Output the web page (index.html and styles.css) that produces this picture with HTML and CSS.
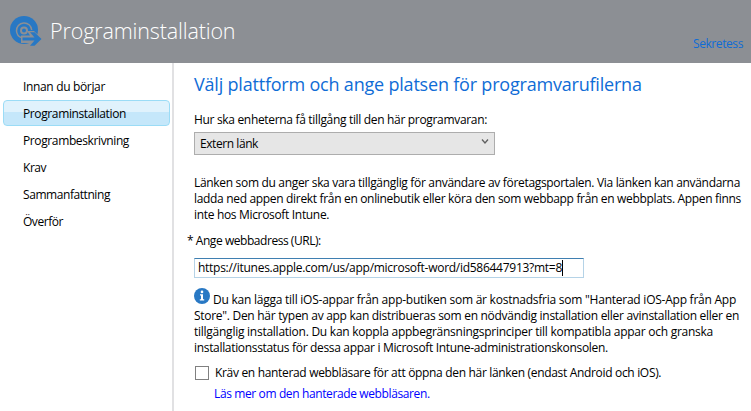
FILE: index.html
```html
<!DOCTYPE html>
<html lang="sv">
<head>
<meta charset="utf-8">
<title>Programinstallation</title>
<link rel="stylesheet" href="styles.css">
</head>
<body>
<header class="banner">
  <svg class="logo" viewBox="0 0 32 32" width="32" height="32" aria-hidden="true">
    <circle cx="14" cy="14" r="14" fill="#2878c4"/>
    <path d="M6.500 15a7.600 7.600 0 0 1 15.200-1M6.500 15q.5 5 4.500 6.500" fill="none" stroke="#8c8f94" stroke-width="1.500"/>
    <circle cx="14" cy="14.500" r="3" fill="none" stroke="#8c8f94" stroke-width="2"/>
    <path d="M11 19.500h9l-3-4.500h7l8 8-8 8h-7l3-4H11z" fill="#8c8f94"/>
    <path d="M12.500 21.500h12l-4.500-5.300h4.500l7 6.800-7 6.800h-4.500l4.500-5.300h-12z" fill="#2878c4"/>
  </svg>
  <h1 class="title">Programinstallation</h1>
  <a class="privacy">Sekretess</a>
</header>
<main class="layout">
  <nav class="steps">
    <a class="step step-start">Innan du börjar</a>
    <a class="step step-active">Programinstallation</a>
    <a class="step">Programbeskrivning</a>
    <a class="step step-short">Krav</a>
    <a class="step step-summary">Sammanfattning</a>
    <a class="step step-short">Överför</a>
  </nav>
  <section class="content">
    <h2 class="heading">Välj plattform och ange platsen för programvarufilerna</h2>
    <p class="label">Hur ska enheterna få tillgång till den här programvaran:</p>
    <div class="select">
      <span>Extern länk</span>
      <svg viewBox="0 0 8 8" width="8" height="8" aria-hidden="true"><path d="M1 1.500l3 3.500 3-3.500" fill="none" stroke="#606060" stroke-width="1.300"/></svg>
    </div>
    <p class="intro">
      <span class="line t318">Länken som du anger ska vara tillgänglig för användare av företagsportalen. Via länken kan användarna</span>
      <span class="line t325">ladda ned appen direkt från en onlinebutik eller köra den som webbapp från en webbplats. Appen finns</span>
      <span class="line t325">inte hos Microsoft Intune.</span>
    </p>
    <p class="url-label">* Ange webbadress (URL):</p>
    <div class="url"><span class="url-text">https://itunes.apple.com/us/app/microsoft-word/id586447913?mt=8</span><i class="caret"></i></div>
    <p class="info">
      <span class="line line-icon t241"><svg class="info-icon" viewBox="0 0 16 16" width="16" height="16" aria-hidden="true"><circle cx="8" cy="8" r="8" fill="#2878c4"/><circle cx="8" cy="3.900" r="1.300" fill="#fff"/><path d="M6 6.200h3v5h1.200v1.300H5.800v-1.300H7V7.400H6z" fill="#fff"/></svg>Du kan lägga till iOS-appar från app-butiken som är kostnadsfria som "Hanterad iOS-App från App</span>
      <span class="line t288">Store". Den här typen av app kan distribueras som en nödvändig installation eller avinstallation eller en</span>
      <span class="line t255">tillgänglig installation. Du kan koppla appbegränsningsprinciper till kompatibla appar och granska</span>
      <span class="line t325">installationsstatus för dessa appar i Microsoft Intune-administrationskonsolen.</span>
    </p>
    <label class="check"><span class="box"></span><span class="t325">Kräv en hanterad webbläsare för att öppna den här länken (endast Android och iOS).</span></label>
    <a class="more">Läs mer om den hanterade webbläsaren.</a>
  </section>
</main>
</body>
</html>
```
FILE: styles.css
```css
* { box-sizing: border-box; }

body {
  margin: 0;
  height: 411px;
  overflow: hidden;
  display: flex;
  flex-direction: column;
  background: #fff;
  color: #000;
  font: 12px/16px "Open Sans", "Noto Sans", sans-serif;
  white-space: nowrap;
}

h1, h2, p { margin: 0; }

.banner {
  height: 63px;
  flex: none;
  display: flex;
  align-items: flex-start;
  padding: 16px 8px 0 10px;
  background: #8c8f94;
}

.title {
  margin-left: 8px;
  font-size: 21.5px;
  line-height: 30px;
  font-weight: 300;
  letter-spacing: -.14px;
  color: #fff;
}

.privacy {
  margin: 20px 0 0 auto;
  color: #0f6cd6;
  letter-spacing: -.413px;
}

.layout { flex: 1; display: flex; }

.steps {
  width: 174px;
  padding: 10px 2px 0 3px;
  border-right: 2px solid #e1e1e3;
}

.step {
  display: block;
  height: 26px;
  margin-bottom: 1px;
  padding-left: 19px;
  border: 1px solid transparent;
  border-radius: 4px;
  line-height: 25px;
  letter-spacing: -.38px;
}

.step-start { letter-spacing: -.341px; }
.step-short { letter-spacing: -.46px; }
.step-summary { letter-spacing: -.431px; }

.step-active {
  border-color: #9bdcf6;
  background: linear-gradient(#e0f2fc 0 45%, #c5e7fa 45% 100%);
}

.content { flex: 1; padding: 9px 0 0 20px; }

.heading {
  font-size: 18px;
  line-height: 24px;
  font-weight: 400;
  letter-spacing: -.2px;
  color: #0f6cd6;
}

.label { margin-top: 16px; letter-spacing: -.324px; }

.select {
  width: 301px;
  height: 23px;
  margin-top: 4px;
  padding: 0 5px 0 5px;
  display: flex;
  align-items: center;
  justify-content: space-between;
  border: 1px solid #adadad;
  background: #e6e6e6;
  letter-spacing: -.429px;
}

.select svg { margin-top: -3px; }

.intro { margin-top: 20px; }
.line { display: block; }
.t241 { letter-spacing: -.241px; }
.t255 { letter-spacing: -.255px; }
.t288 { letter-spacing: -.288px; }
.t318 { letter-spacing: -.318px; }
.t325 { letter-spacing: -.325px; }

.url-label { margin: 10px 0 0 -7px; letter-spacing: -.45px; }

.url {
  width: 390px;
  height: 20px;
  margin-top: 9px;
  padding-left: 3px;
  display: flex;
  align-items: center;
  border: 1px solid #b5d3e7;
  border-top-color: #3f7fb1;
  letter-spacing: -.274px;
}

.caret { width: 1px; height: 16px; background: #000; }

.info { margin-top: 10px; }
.line-icon { display: flex; height: 20px; align-items: flex-end; }
.info-icon { margin-right: 3px; align-self: flex-start; }

.check {
  display: flex;
  align-items: center;
  gap: 6px;
  margin: 9px 0 0 1px;
}

.box {
  width: 14px;
  height: 14px;
  border: 1px solid #808080;
}

.more {
  display: block;
  margin: 5px 0 0 20px;
  color: #00f;
  letter-spacing: -.38px;
}
```
